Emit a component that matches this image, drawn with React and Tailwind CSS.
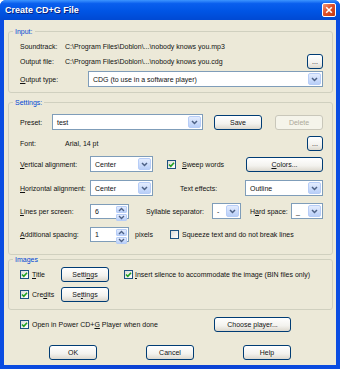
import React from 'react';

/* ── small XP widgets ── */
function DropArrow() {
  return (
    <div className="w-[13px] h-full shrink-0 rounded-[2px] border border-[#b7cdf7] bg-[linear-gradient(180deg,#e3ecfe,#b9cff8)] flex items-center justify-center">
      <svg width="7" height="5" viewBox="0 0 7 5">
        <path d="M1 1l2.5 2.5L6 1" stroke="#4d6185" strokeWidth="1.5" fill="none" />
      </svg>
    </div>
  );
}

function Combo({ value, className = '' }) {
  return (
    <div className={`flex h-[16px] border border-[#7f9db9] bg-white p-[1px] ${className}`}>
      <div className="flex-1 flex items-center pl-[3px] overflow-hidden">{value}</div>
      <DropArrow />
    </div>
  );
}

function Spin({ value }) {
  return (
    <div className="flex w-[39px] h-[15px] border border-[#7f9db9] bg-white p-[1px]">
      <div className="flex-1 flex items-center pl-[3px]">{value}</div>
      <div className="w-[11px] flex flex-col gap-[1px]">
        {['M1 4l2.5-2.5L6 4', 'M1 1l2.5 2.5L6 1'].map(d => (
          <div key={d} className="flex-1 rounded-[1px] border border-[#b7cdf7] bg-[linear-gradient(180deg,#e3ecfe,#b9cff8)] flex items-center justify-center">
            <svg width="7" height="5" viewBox="0 0 7 5"><path d={d} stroke="#4d6185" strokeWidth="1.3" fill="none" /></svg>
          </div>
        ))}
      </div>
    </div>
  );
}

function Btn({ children, className = '', disabled }) {
  return (
    <div className={`h-[15px] shrink-0 rounded-[3px] border flex items-center justify-center ${disabled ? 'border-[#c9c7ba] bg-[#f5f4ea] text-[#aca899]' : 'border-[#003c74] bg-[linear-gradient(180deg,#ffffff_0%,#f3f2ee_60%,#dcd8ce_100%)]'} ${className}`}>
      {children}
    </div>
  );
}

function Check({ children, gap = 'gap-[4px]' }) {
  return (
    <div className={`flex items-center ${gap}`}>
      <div className="w-[9px] h-[9px] shrink-0 border border-[#1c5180] bg-[linear-gradient(135deg,#dcdcd7,#ffffff)] flex items-center justify-center">
        <svg width="7" height="7" viewBox="0 0 7 7">
          <path d="M1 3.5l1.8 1.8L6 1.8" stroke="#21a121" strokeWidth="1.6" fill="none" />
        </svg>
      </div>
      <span>{children}</span>
    </div>
  );
}

function Box({ children, gap = 'gap-[4px]' }) {
  return (
    <div className={`flex items-center ${gap}`}>
      <div className="w-[9px] h-[9px] shrink-0 border border-[#1c5180] bg-[linear-gradient(135deg,#dcdcd7,#ffffff)]" />
      <span>{children}</span>
    </div>
  );
}

const U = ({ children }) => <span className="underline underline-offset-[1px]">{children}</span>;

export default function App() {
  return (
    <div className="w-[340px] h-[369px] flex flex-col bg-[linear-gradient(90deg,#0a4de2,#0b3fd0_50%,#0a4de2)] rounded-t-[6px] overflow-hidden font-['Liberation_Sans',Arial,sans-serif] text-[7px] leading-none text-[#111] whitespace-nowrap">
      {/* ══ TITLE BAR ══ */}
      <div className="h-[20px] shrink-0 flex items-center justify-between pl-[5px] pr-[4px] bg-[linear-gradient(180deg,#3d95ff_0%,#0a5fee_18%,#0055e5_55%,#0049d3_100%)]">
        <span className="text-white font-bold text-[9px] [text-shadow:1px_1px_0_#0a1f7a]">Create CD+G File</span>
        <div className="w-[14px] h-[14px] rounded-[2px] border border-white bg-[linear-gradient(135deg,#f19a7a,#e0502a_45%,#c23a12)] flex items-center justify-center">
          <svg width="8" height="8" viewBox="0 0 8 8">
            <path d="M1.2 1.2l5.6 5.6M6.8 1.2L1.2 6.8" stroke="#fff" strokeWidth="1.6" />
          </svg>
        </div>
      </div>

      {/* ══ BODY ══ */}
      <div className="flex-1 mx-[4px] mb-[4px] bg-[#ece9d8] flex flex-col">
        {/* Input */}
        <fieldset className="mt-[8px] ml-[4px] mr-[3px] border border-[#d0d0bf] rounded-[3px]">
          <legend className="ml-[4px] px-[2px] text-[#0046d5]">Input:</legend>
          <div className="pl-[11px] pr-[9px] pt-[4px] pb-[5px] flex flex-col">
            <div className="h-[15px] flex items-center">
              <span className="w-[45px]">Soundtrack:</span>
              <span>C:\Program Files\Doblon\...\nobody knows you.mp3</span>
            </div>
            <div className="h-[15px] flex items-center">
              <span className="w-[45px]">Output file:</span>
              <span>C:\Program Files\Doblon\...\nobody knows you.cdg</span>
              <Btn className="ml-auto w-[16px] h-[13px]">...</Btn>
            </div>
            <div className="mt-[2px] flex items-center">
              <span className="w-[68px]"><U>O</U>utput type:</span>
              <Combo className="flex-1" value="CDG (to use in a software player)" />
            </div>
          </div>
        </fieldset>

        {/* Settings */}
        <fieldset className="mt-[6px] ml-[4px] mr-[3px] border border-[#d0d0bf] rounded-[3px]">
          <legend className="ml-[4px] px-[2px] text-[#0046d5]">Settings:</legend>
          <div className="pl-[11px] pr-[9px] pt-[9px] pb-[12px] flex flex-col">
            <div className="h-[14px] flex items-center">
              <span className="w-[32px]">Preset:</span>
              <Combo className="w-[151px] h-[14px]" value="test" />
              <Btn className="ml-[11px] w-[48px] h-[14px]">Save</Btn>
              <Btn disabled className="ml-auto w-[48px] h-[14px]">Delete</Btn>
            </div>
            <div className="mt-[7px] h-[14px] flex items-center">
              <span className="w-[45px]">Font:</span>
              <span>Arial, 14 pt</span>
              <Btn className="ml-auto w-[16px] h-[14px]">...</Btn>
            </div>
            <div className="mt-[6px] flex items-center">
              <span className="w-[70px]"><U>V</U>ertical alignment:</span>
              <Combo className="w-[63px]" value="Center" />
              <div className="ml-[14px]"><Check gap="gap-[6px]"><U>S</U>weep words</Check></div>
              <Btn className="ml-auto w-[77px]"><U>C</U>olors...</Btn>
            </div>
            <div className="mt-[8px] flex items-center">
              <span className="w-[70px]"><U>H</U>orizontal alignment:</span>
              <Combo className="w-[63px]" value="Center" />
              <span className="ml-[27px]">Text effects:</span>
              <Combo className="ml-auto w-[78px]" value="Outline" />
            </div>
            <div className="mt-[7px] flex items-center">
              <span className="w-[70px]"><U>L</U>ines per screen:</span>
              <Spin value="6" />
              <span className="ml-[17px] w-[66px]">Syllable separator:</span>
              <Combo className="w-[29px] h-[15px]" value="-" />
              <span className="ml-[9px]">H<U>a</U>rd space:</span>
              <Combo className="ml-auto w-[32px] h-[15px]" value="_" />
            </div>
            <div className="mt-[8px] flex items-center">
              <span className="w-[70px]"><U>A</U>dditional spacing:</span>
              <Spin value="1" />
              <span className="ml-[6px] w-[35px]">pixels</span>
              <Box gap="gap-[3px]">Squeeze text and do not break lines</Box>
            </div>
          </div>
        </fieldset>

        {/* Images */}
        <fieldset className="mt-[1px] ml-[4px] mr-[3px] border border-[#d0d0bf] rounded-[3px]">
          <legend className="ml-[4px] px-[2px] text-[#0046d5]">Images</legend>
          <div className="pl-[11px] pr-[9px] pt-[4px] pb-[7px] flex flex-col">
            <div className="h-[15px] flex items-center">
              <div className="w-[41px]"><Check gap="gap-[3px]"><U>T</U>itle</Check></div>
              <Btn className="w-[48px]">Setti<U>n</U>gs</Btn>
              <div className="ml-[15px]"><Check gap="gap-[2px]"><U>I</U>nsert silence to accommodate the image (BIN files only)</Check></div>
            </div>
            <div className="mt-[5px] h-[15px] flex items-center">
              <div className="w-[41px]"><Check gap="gap-[3px]">Cre<U>d</U>its</Check></div>
              <Btn className="w-[48px]">Se<U>t</U>tings</Btn>
            </div>
          </div>
        </fieldset>

        {/* Player */}
        <div className="mt-[7px] pl-[16px] h-[15px] flex items-center">
          <div className="w-[194px]"><Check gap="gap-[3px]">Open in Power CD+<U>G</U> Player when done</Check></div>
          <Btn className="w-[77px]">Choose player...</Btn>
        </div>

        {/* Dialog buttons */}
        <div className="mt-[13px] flex justify-center gap-[49px]">
          <Btn className="w-[48px]">OK</Btn>
          <Btn className="w-[48px]">Cancel</Btn>
          <Btn className="w-[48px]">Help</Btn>
        </div>
      </div>
    </div>
  );
}
